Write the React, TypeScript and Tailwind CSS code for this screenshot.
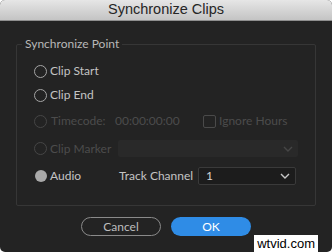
import React from "react";

const Radio = ({ state }: { state: "on" | "off" | "disabled" }) => {
  if (state === "on")
    return <div className="w-[12px] h-[12px] rounded-full bg-[#a9a9a9] shrink-0" />;
  return (
    <div
      className={
        "w-[13px] h-[13px] rounded-full border-[1.5px] shrink-0 " +
        (state === "off" ? "border-[#a5a5a5]" : "border-[#464646]")
      }
    />
  );
};

const Chevron = ({ color }: { color: string }) => (
  <svg width="10" height="6" viewBox="0 0 10 6" fill="none">
    <path d="M1 1l4 4 4-4" stroke={color} strokeWidth="1.4" />
  </svg>
);

export default function App() {
  return (
    <div className="w-[332px] h-[252px] bg-white relative" style={{ fontFamily: "Lato, 'Open Sans', sans-serif" }}>
      <div className="w-[332px] h-[252px] rounded-[5px] overflow-hidden bg-[#232323] flex flex-col">
        <div
          className="h-[21px] shrink-0 flex items-center justify-center bg-gradient-to-b from-[#e6e6e6] to-[#c4c4c4] border-b border-[#8e8e8e] text-[#262626] text-[14.5px]"
          style={{ fontFamily: "'Liberation Sans', Arial, sans-serif" }}
        >
          Synchronize Clips
        </div>
        <div className="pt-[23px] pl-[16px] pr-[16px]">
          <div className="relative h-[162px] border border-[#363636] rounded-[2px] pt-[14px] pl-[17px]">
            <div className="absolute -top-[9px] left-[5px] px-[3px] bg-[#232323] text-[12px] text-[#b8b8b8] leading-[16px]">
              Synchronize Point
            </div>
            <div className="h-[24px] flex items-center text-[12px] text-[#c4c4c4]">
              <Radio state="off" />
              <span className="ml-[3px]">Clip Start</span>
            </div>
            <div className="h-[24px] flex items-center text-[12px] text-[#c4c4c4]">
              <Radio state="off" />
              <span className="ml-[3px]">Clip End</span>
            </div>
            <div className="h-[28px] flex items-center text-[12px] text-[#4c4c4c]">
              <div className="w-[81px] flex items-center">
                <Radio state="disabled" />
                <span className="ml-[4px]">Timecode:</span>
              </div>
              <span className="w-[88px]">00:00:00:00</span>
              <div className="w-[13px] h-[13px] border-[1.5px] border-[#4a4a4a] rounded-[2px]" />
              <span className="ml-[3px]">Ignore Hours</span>
            </div>
            <div className="h-[27px] flex items-center text-[12px] text-[#4c4c4c]">
              <div className="w-[84px] flex items-center">
                <Radio state="disabled" />
                <span className="ml-[3px]">Clip Marker</span>
              </div>
              <div className="w-[180px] h-[17px] bg-[#292929] rounded-[2px] flex items-center justify-end pr-[5px]">
                <Chevron color="#464646" />
              </div>
            </div>
            <div className="h-[27px] flex items-center text-[12px] text-[#c4c4c4]">
              <div className="w-[85px] flex items-center">
                <div className="w-[13px] flex justify-center"><Radio state="on" /></div>
                <span className="ml-[3px]">Audio</span>
              </div>
              <span className="w-[79px]">Track Channel</span>
              <div className="w-[98px] h-[18px] bg-[#1c1c1c] border border-[#3a3a3a] rounded-[2px] flex items-center justify-between pl-[7px] pr-[5px] text-[#d4d4d4]">
                <span>1</span>
                <Chevron color="#c8c8c8" />
              </div>
            </div>
          </div>
        </div>
        <div className="flex justify-center gap-[10px] mt-[11px]">
          <div className="w-[80px] h-[19px] rounded-full border-[1.5px] border-[#8a8a8a] flex items-center justify-center text-[12px] text-[#bdbdbd]">
            Cancel
          </div>
          <div className="w-[80px] h-[19px] rounded-full bg-[#2f8ce6] flex items-center justify-center text-[12px] text-white">
            OK
          </div>
        </div>
      </div>
      <div
        className="absolute right-[14px] bottom-0 h-[17px] px-[3px] bg-white text-black text-[13px] flex items-center"
        style={{ fontFamily: "'Liberation Sans', Arial, sans-serif" }}
      >
        wtvid.com
      </div>
    </div>
  );
}
